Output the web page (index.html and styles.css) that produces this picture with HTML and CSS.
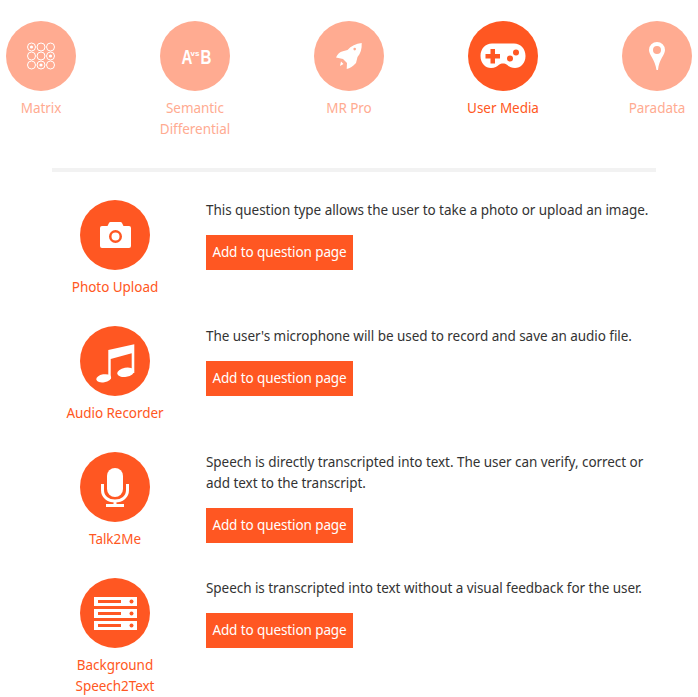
FILE: index.html
```html
<!DOCTYPE html>
<html lang="en">
<head>
    <meta charset="UTF-8">
    <meta name="viewport" content="width=device-width, initial-scale=1.0">
    <title>Question types</title>
    <link rel="stylesheet" href="styles.css">
</head>
<body>
    <nav class="tabs">
        <a class="tab">
            <span class="circle">
                <svg width="28" height="28" viewBox="0 0 28 28" fill="none" stroke="#fff" stroke-width="1">
                    <circle cx="4.500" cy="5" r="4"/><circle cx="14" cy="5" r="4"/><circle cx="23.500" cy="5" r="4"/>
                    <circle cx="4.500" cy="14" r="4"/><circle cx="14" cy="14" r="4"/><circle cx="23.500" cy="14" r="4"/>
                    <circle cx="4.500" cy="23" r="4"/><circle cx="14" cy="23" r="4"/><circle cx="23.500" cy="23" r="4"/>
                    <g fill="#fff" stroke="none">
                        <circle cx="4.500" cy="5" r="1.600"/><circle cx="23.500" cy="14" r="1.600"/><circle cx="14" cy="23" r="1.600"/>
                    </g>
                </svg>
            </span>
            <span class="tab-label">Matrix</span>
        </a>
        <a class="tab">
            <span class="circle">
                <span class="versus"><span class="versus-big">A</span><span class="versus-small">vs</span><span class="versus-big">B</span></span>
            </span>
            <span class="tab-label">Semantic Differential</span>
        </a>
        <a class="tab">
            <span class="circle">
                <svg width="26" height="26" viewBox="0 0 26 26" fill="#fff">
                    <path fill-rule="evenodd" d="M25.700 0C26 6 24.500 10.500 21.500 14L20 20C17 23.500 14 25 10.700 26L11 20 7 16 0 14.500C1.500 11 3.500 9.500 6 8.500L11.500 7C15 3 20 .5 25.700 0zM18.700 4.800a1.300 1.300 0 1 0 0 2.600 1.300 1.300 0 0 0 0-2.600z"/>
                    <path d="M5 18.500l2.500 2.500-3.500 2z"/>
                </svg>
            </span>
            <span class="tab-label">MR Pro</span>
        </a>
        <a class="tab tab-active">
            <span class="circle">
                <svg width="46" height="26" viewBox="0 0 46 26">
                    <path fill="#fff" d="M12 .5h22c6.500 0 11.500 5 11.500 12.500S40.500 25 35 25c-4 0-6-1.500-8-3.200-1.200-1-2.500-1.300-4-1.300s-2.800.3-4 1.300C17 23.500 15 25 11 25 5.500 25 .5 20.500.5 13S5.500.5 12 .5z"/>
                    <path fill="#ff5722" d="M10.500 6h4.500v5h5v4.500h-5v5h-4.500v-5h-5V11h5z"/>
                    <circle fill="#ff5722" cx="36" cy="9.500" r="3"/>
                    <circle fill="#ff5722" cx="30" cy="15.500" r="3"/>
                </svg>
            </span>
            <span class="tab-label">User Media</span>
        </a>
        <a class="tab">
            <span class="circle">
                <svg width="16" height="28" viewBox="0 0 16 28">
                    <path fill="#fff" fill-rule="evenodd" d="M8 0a8 8 0 0 1 8 8c0 5-6 9-7 20H7.500C6 17 0 13 0 8a8 8 0 0 1 8-8zm0 4a4 4 0 1 0 0 8 4 4 0 0 0 0-8z"/>
                </svg>
            </span>
            <span class="tab-label">Paradata</span>
        </a>
    </nav>

    <hr class="divider">

    <div class="items">
        <div class="item">
            <div class="item-side">
                <span class="circle circle-on">
                    <svg width="31" height="26" viewBox="0 0 31 26">
                        <path fill="#fff" fill-rule="evenodd" d="M2 4h5.500l1.500-3q.5-1 1.500-1h10q1 0 1.500 1l1.500 3H29a2 2 0 0 1 2 2v18a2 2 0 0 1-2 2H2a2 2 0 0 1-2-2V6a2 2 0 0 1 2-2zm13.500 4a6.500 6.500 0 1 0 0 13 6.500 6.500 0 0 0 0-13zm0 2.500a4 4 0 1 1 0 8 4 4 0 0 1 0-8z"/>
                    </svg>
                </span>
                <span class="item-name">Photo Upload</span>
            </div>
            <div class="item-body">
                <p class="item-text">This question type allows the user to take a photo or upload an image.</p>
                <button class="add-btn" type="button">Add to question page</button>
            </div>
        </div>
        <div class="item">
            <div class="item-side">
                <span class="circle circle-on">
                    <svg width="39" height="44" viewBox="0 -5 39 44" fill="#fff">
                        <path d="M12.300 6L38.300 .3V29H35.700V9.300L14.700 15V35H12.300z"/>
                        <ellipse cx="7.700" cy="34.300" rx="7.500" ry="4" transform="rotate(-10 7.700 34.300)"/>
                        <ellipse cx="29.700" cy="28.300" rx="8.600" ry="4.500" transform="rotate(-10 29.700 28.300)"/>
                    </svg>
                </span>
                <span class="item-name">Audio Recorder</span>
            </div>
            <div class="item-body">
                <p class="item-text">The user's microphone will be used to record and save an audio file.</p>
                <button class="add-btn" type="button">Add to question page</button>
            </div>
        </div>
        <div class="item">
            <div class="item-side">
                <span class="circle circle-on">
                    <svg width="28" height="39" viewBox="0 0 28 39">
                        <rect fill="#fff" x="6" y="0" width="16" height="29" rx="8"/>
                        <path fill="none" stroke="#fff" stroke-width="3" d="M1.500 16v6c0 7 5.500 11 12.500 11s12.500-4 12.500-11v-6M14 33v5M5 37.500h18"/>
                    </svg>
                </span>
                <span class="item-name">Talk2Me</span>
            </div>
            <div class="item-body">
                <p class="item-text">Speech is directly transcripted into text. The user can verify, correct or add text to the transcript.</p>
                <button class="add-btn" type="button">Add to question page</button>
            </div>
        </div>
        <div class="item">
            <div class="item-side">
                <span class="circle circle-on">
                    <svg width="43" height="33" viewBox="0 0 43 33">
                        <path fill="#fff" d="M0 0h43v9H0zM0 12h43v9H0zM0 24h43v9H0z"/>
                        <path fill="#ff5722" d="M4 3h23v3H4zM4 15h23v3H4zM4 27h23v3H4z"/>
                        <circle fill="#ff5722" cx="37.500" cy="4.500" r="2"/>
                        <circle fill="#ff5722" cx="37.500" cy="16.500" r="2"/>
                        <circle fill="#ff5722" cx="37.500" cy="28.500" r="2"/>
                    </svg>
                </span>
                <span class="item-name">Background Speech2Text</span>
            </div>
            <div class="item-body">
                <p class="item-text">Speech is transcripted into text without a visual feedback for the user.</p>
                <button class="add-btn" type="button">Add to question page</button>
            </div>
        </div>
    </div>
</body>
</html>
```

FILE: styles.css
```css
body {
    font-family: "Noto Sans", "Open Sans", sans-serif;
    font-size: 13.5px;
    letter-spacing: -0.05px;
    line-height: 21px;
    margin: 0;
    padding: 0;
    background-color: #fff;
    color: #333;
}
.tabs {
    display: flex;
    gap: 84px;
    padding: 21px 0 0 6px;
    height: 168px;
    box-sizing: border-box;
}
.tab {
    width: 70px;
    display: flex;
    flex-direction: column;
    align-items: center;
    text-align: center;
    color: #ffab91;
}
.tab-active {
    color: #ff5722;
}
.circle {
    width: 70px;
    height: 70px;
    border-radius: 50%;
    background-color: #ffab91;
    display: flex;
    align-items: center;
    justify-content: center;
    flex-shrink: 0;
}
.tab-active .circle, .circle-on {
    background-color: #ff5722;
}
.tab-label {
    margin: 7px -10px 0;
    width: 90px;
}
.versus {
    display: flex;
    align-items: center;
    font-family: "Liberation Sans", sans-serif;
    font-weight: bold;
    letter-spacing: 0;
    color: #fff;
}
.versus-big {
    font-size: 21px;
    transform: scaleX(0.72);
    width: 11px;
    display: block;
    text-align: center;
}
.versus-small {
    font-size: 8px;
    margin: -5px 0 0 0;
}
.divider {
    height: 4px;
    width: 604px;
    margin: 0 0 28px 52px;
    border: 0;
    background-color: #f2f2f2;
}
.items {
    padding-left: 60px;
}
.item {
    display: flex;
    height: 126px;
}
.item-side {
    width: 110px;
    display: flex;
    flex-direction: column;
    align-items: center;
    text-align: center;
    color: #ff5722;
}
.item-name {
    margin-top: 7px;
}
.item-body {
    margin-left: 36px;
    width: 450px;
}
.item-text {
    margin: 0 0 14px;
}
.add-btn {
    display: block;
    height: 35px;
    width: 147px;
    padding: 0 0 2px;
    border: none;
    background-color: #ff5722;
    color: #fff;
    font-family: inherit;
    font-size: 13.5px;
    letter-spacing: -0.1px;
    cursor: pointer;
}
```
